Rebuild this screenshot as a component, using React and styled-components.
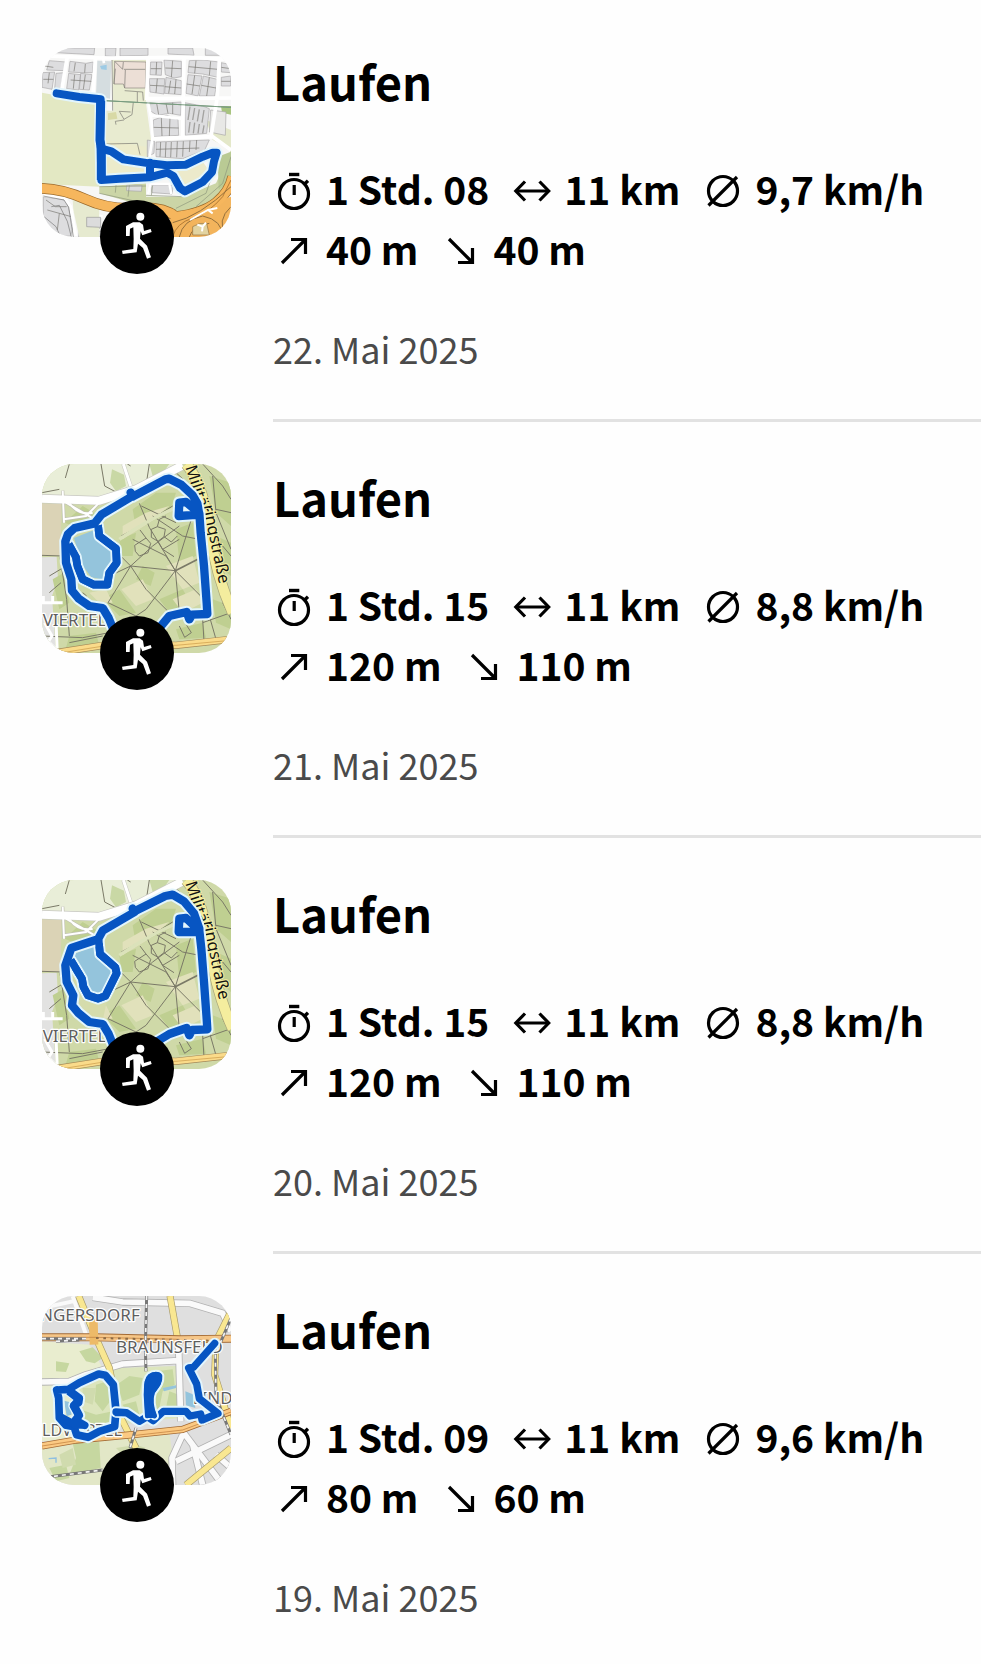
import styled, { createGlobalStyle } from 'styled-components';

const activities = [
  {
    id: 1,
    map: 'stadium',
    duration: '1 Std. 08',
    distance: '11 km',
    speed: '9,7 km/h',
    up: '40 m',
    down: '40 m',
    date: '22. Mai 2025',
    dateTime: '2025-05-22',
  },
  {
    id: 2,
    map: 'forestLong',
    duration: '1 Std. 15',
    distance: '11 km',
    speed: '8,8 km/h',
    up: '120 m',
    down: '110 m',
    date: '21. Mai 2025',
    dateTime: '2025-05-21',
  },
  {
    id: 3,
    map: 'forestShort',
    duration: '1 Std. 15',
    distance: '11 km',
    speed: '8,8 km/h',
    up: '120 m',
    down: '110 m',
    date: '20. Mai 2025',
    dateTime: '2025-05-20',
  },
  {
    id: 4,
    map: 'city',
    duration: '1 Std. 09',
    distance: '11 km',
    speed: '9,6 km/h',
    up: '80 m',
    down: '60 m',
    date: '19. Mai 2025',
    dateTime: '2025-05-19',
  },
];

const Track = ({ d, width = 23 }) => (
  <g fill='none' strokeLinejoin='round' strokeLinecap='round'>
    <path d={d} stroke='#e2f5fd' strokeWidth={width + 12} />
    <path d={d} stroke='#0755c2' strokeWidth={width} />
  </g>
);

const StadiumMap = () => (
  <MapSvg viewBox='18 24 567 567' aria-hidden='true'>
    <rect x='18' y='24' width='567' height='567' fill='#f7f7f6' />
    {/* fields */}
    <path d='M18 158 L60 166 L180 182 L190 440 L18 432Z' fill='#e3e8c3' />
    <path d='M228 60 L232 212 L205 212 L205 415 L330 415 L345 300 L330 190 L330 60Z' fill='#e8ebd0' />
    <path d='M205 300 L330 320 L335 420 L205 425Z' fill='#ecebcb' />
    <path d='M330 375 L500 365 L525 400 L440 460 L380 400Z' fill='#eceacb' />
    <path d='M190 440 L330 430 L330 470 L440 470 L540 430 L585 330 L585 430 L520 500 L400 520 L190 460Z' fill='#cbd5a6' />
    <path d='M545 350 L585 335 L585 420 L548 450Z' fill='#b9ca94' />
    <path d='M510 240 L585 270 L585 330 L530 300Z' fill='#e4e8c9' />
    <path d='M555 198 L585 198 L585 224 L558 218Z' fill='#a8c47f' />
    {/* blocks */}
    <g fill='#dddddf' stroke='#a9a8a9' strokeWidth='2'>
      <path d='M60 24 L176 24 L174 44 L58 38Z M208 24 L240 24 L238 50 L208 48Z M252 24 L336 24 L336 46 L252 48Z M396 24 L470 24 L474 46 L396 42Z M508 24 L560 28 L560 46 L508 46Z' />
      <path d='M40 62 L90 66 L86 92 L32 90Z M20 98 L56 96 L48 148 L18 142Z M60 100 L84 98 L74 146 L56 146Z' />
      <path d='M102 64 L150 70 L172 66 L170 98 L138 98 L98 96Z M98 100 L134 104 L128 150 L92 146Z M134 100 L168 104 L160 150 L130 148Z' />
      <path d='M344 66 L378 66 L376 106 L342 104Z M384 60 L436 64 L436 110 L414 114 L388 104Z M340 116 L386 116 L384 162 L342 156Z M390 112 L436 122 L436 164 L386 160Z' />
      <path d='M460 62 L504 60 L548 66 L546 112 L500 102 L456 98Z M456 104 L498 108 L486 168 L450 160Z M502 108 L544 118 L536 168 L490 168Z M556 68 L584 74 L584 98 L556 96Z M556 112 L584 108 L584 138 L556 138Z' />
      <path d='M336 192 L436 186 L434 226 L400 220 L364 226 L342 212Z M352 240 L392 226 L426 238 L428 286 L350 290Z' />
      <path d='M446 188 L500 198 L520 206 L512 280 L448 286Z' />
      <path d='M334 300 L356 304 L354 340 L334 350Z M360 306 L520 300 L506 330 L440 356 L360 350Z' />
      <path d='M524 210 L570 216 L568 286 L520 276Z' fill='#e8e8e6' />
      <path d='M344 436 L412 436 L408 462 L348 458Z M272 436 L318 436 L316 454 L272 452Z' />
      <path d='M22 470 L92 480 L112 560 L104 588 L60 590 L22 540Z M154 528 L192 534 L192 566 L150 558Z M130 570 L196 574 L196 591 L128 591Z' />
    </g>
    <path d='M184 62 L226 64 L222 176 L180 168Z' fill='#d5dde0' />
    <path d='M192 78 L212 74 L212 90 L196 88Z' fill='#9ecbe5' />
    <path d='M236 64 L330 66 L328 144 L266 144 L262 132 L234 132Z' fill='#ecdfd6' stroke='#8d867f' strokeWidth='2' />
    <path d='M216 220 L240 216 L244 236 L216 240Z' fill='#d8d9a5' />
    {/* plot lines */}
    <g fill='none' stroke='#77766f' strokeWidth='2'>
      <path d='M26 78 L52 82 M40 98 L36 130 M22 118 L52 118 M118 68 L114 94 M104 120 L166 124 M148 72 L146 98 M116 104 L112 146 M148 104 L142 148' />
      <path d='M344 86 L376 86 M362 66 L360 104 M388 84 L436 86 M410 62 L406 112 M342 136 L384 138 M364 116 L360 158 M404 122 L398 160 M386 140 L436 144 M420 118 L416 162' />
      <path d='M480 62 L476 100 M458 80 L546 88 M524 64 L520 106 M452 132 L492 138 M476 106 L468 162 M496 136 L540 144 M520 112 L512 168 M556 82 L584 86 M556 124 L584 124' />
      <path d='M362 190 L368 224 M390 190 L396 220 M410 188 L410 222 M352 262 L428 264 M376 234 L378 288 M402 232 L400 288' />
      <path d='M462 200 L456 240 M476 204 L470 240 M490 208 L484 244 M504 210 L498 248 M462 246 L458 278 M476 248 L472 280 M490 252 L486 280 M504 256 L500 280' stroke='#a3a2a0' strokeWidth='4' />
      <path d='M374 306 L372 350 M390 306 L388 352 M406 306 L404 352 M424 304 L422 352 M442 304 L440 350 M360 328 L490 324 M462 302 L460 336 M482 300 L480 330' />
      <path d='M236 64 L260 88 L262 66 M238 86 L234 132 M264 88 L328 88 M268 90 L266 144 M228 60 L230 212 M266 152 L320 156 L322 182 M304 156 L304 186 M292 186 L288 224 L264 238 L250 214 L284 216 M240 254 L238 244 L264 240 M205 312 L304 310 L312 344' />
      <path d='M190 440 L330 438 M190 460 L420 510 M240 436 L238 458 M280 436 L276 470 M350 436 L346 466 M548 350 L510 460 L420 505 M585 350 L560 430 L480 500 M330 466 L440 470' stroke='#8d967b' />
      <path d='M30 480 L58 500 L92 500 M34 510 L70 520 L64 570 M70 520 L106 530 M160 530 L158 556 M174 532 L172 558' />
    </g>
    <path d='M206 182 L585 202' stroke='#7a9c80' strokeWidth='3' fill='none' />
    {/* streets */}
    <g fill='none' stroke='#ffffff' strokeWidth='11'>
      <path d='M30 48 L200 54 L460 52 L585 58 M94 50 L76 156 M178 58 L170 180 M336 56 L332 180 M444 56 L440 290 M550 60 L544 170 L525 290 M330 176 L585 174 M350 296 L530 290 L585 330' />
      <path d='M336 186 L346 236 L350 290 L340 356 M346 226 L436 236 M204 70 L200 48' strokeWidth='8' />
      <path d='M336 462 L344 432 L400 432 L406 462' strokeWidth='7' />
      <path d='M22 466 L86 474 L104 500 L120 588 M110 510 L200 530' strokeWidth='9' />
    </g>
    <path d='M206 182 L585 202' stroke='#7a9c80' strokeWidth='3' fill='none' />
    <path d='M22 468 L84 480 L98 502 L112 591 M46 500 L70 496 L94 544 L106 591 M24 530 L60 560 L74 591' fill='none' stroke='#777' strokeWidth='2' />
    <path d='M110 480 L190 486 L190 591 L130 591 L112 510Z' fill='#e6ead0' />
    <path d='M152 532 L194 532 L194 562 L152 560Z' fill='#dcdcdc' stroke='#999' strokeWidth='2' />
    {/* motorway */}
    <g fill='none'>
      <path d='M14 445 Q80 446 150 478 T300 504 T420 530 Q500 520 540 488 T590 410' stroke='#9a6a2c' strokeWidth='32' />
      <path d='M400 540 L420 524 L585 470 L585 591 L400 591Z' fill='#f3b45c' />
      <path d='M14 445 Q80 446 150 478 T300 504 T420 530 Q500 520 540 488 T590 410' stroke='#f6b65d' strokeWidth='28' />
      <path d='M410 591 Q420 550 470 534 T560 470 L585 420' stroke='#b37a35' strokeWidth='3' />
      <path d='M430 591 Q440 540 500 528 Q560 540 560 591 M460 591 Q470 556 520 550 M585 500 Q540 540 570 591 M410 548 Q490 530 585 440' stroke='#94703d' strokeWidth='3' />
      <path d='M560 591 Q556 560 585 530 L585 591Z' fill='#d6cf98' />
      <path d='M470 560 Q490 546 512 550 L520 585 L470 585Z' fill='#e2d3a0' stroke='#94703d' strokeWidth='2' />
      <path d='M462 540 L516 510 L544 504 M516 510 L530 520 M484 554 L500 560 L498 574 M500 560 L510 548' stroke='#fff' strokeWidth='6' />
    </g>
    <Track d='M62 160 L130 171 L194 178 L192 300 L196 326 L226 334 L262 358 L340 370 L392 376 L450 374 L500 350 L530 338 L542 338 L534 364 L528 396 L500 426 L446 454 L432 444 L412 408 L394 398 L340 412 L250 416 L196 420 L194 320 M342 368 L342 412' width={24} />
    <path d='M194 182 L192 300 L196 326 L196 420' fill='none' stroke='#0755c2' strokeWidth='27' strokeLinejoin='round' />
  </MapSvg>
);

const forestTracks = {
  forestLong:
    'M232 520 L218 486 L200 456 L160 450 L128 428 L108 404 L106 370 L90 320 L88 256 L96 234 L116 216 L176 202 L196 176 L290 120 L284 110 L290 122 L388 70 L400 68 L436 86 L470 118 L484 142 L490 176 L428 180 L430 140 L450 138 L490 172 L494 230 L504 330 L512 440 L514 474 L468 476 L460 490 L452 468 L400 480 L370 516',
  forestShort:
    'M232 520 L218 486 L200 456 L160 450 L128 424 L108 400 L112 370 L92 330 L88 280 L106 228 L186 202 L200 176 L296 120 L290 110 L296 118 L388 72 L410 68 L444 88 L474 124 L490 170 L490 180 L428 180 L430 140 L450 138 L490 176 L496 230 L504 330 L512 440 L514 472 L468 474 L460 490 L452 468 L400 486 L360 510',
};

const lakeTracks = {
  forestLong: 'M186 208 L190 240 L240 278 L242 320 L220 350 L214 386 L174 386 L140 370 L124 330 L120 304 L98 264',
  forestShort: 'M188 204 L192 246 L238 286 L242 304 L208 372 L186 380 L156 370 L142 344 L138 320 L104 264',
};

const ForestMap = ({ variant }) => (
  <MapSvg viewBox='18 24 567 567' aria-hidden='true'>
    <rect x='18' y='24' width='567' height='567' fill='#cfd9a8' />
    <path d='M18 24 L440 24 L400 60 L200 130 L18 126Z' fill='#e9eed8' />
    <path d='M228 40 L264 56 L270 90 L240 106 L222 80Z M340 24 L400 24 L380 52 L350 60Z' fill='#c9d8a5' />
    <path d='M18 142 L76 144 L74 300 L18 298Z' fill='#dbd3b6' />
    <path d='M18 304 L62 302 L66 370 L48 420 L60 591 L18 591Z' fill='#e2e2e1' />
    <g fill='#bfcf91'>
      <path d='M86 200 L140 150 L190 180 L120 214Z M290 160 L360 110 L420 110 L400 170 L300 220Z M320 330 L356 350 L344 390 L300 370Z' />
      <path d='M200 430 L250 400 L300 470 L250 480Z M370 430 L440 400 L470 450 L400 470Z M520 60 L585 80 L585 210 L540 170Z M530 430 L585 450 L585 520 L540 500Z' />
      <path d='M50 370 L84 350 L100 440 L70 460Z M100 540 L180 530 L190 570 L90 575Z M420 220 L470 200 L480 300 L430 320Z M250 250 L300 230 L290 300 L256 300Z' />
      <path d='M540 240 L585 260 L585 360 L560 340Z M420 520 L500 500 L510 545 L430 550Z' />
    </g>
    <g fill='#e1e1bb'>
      <path d='M390 330 L470 300 L490 380 L440 400Z M260 210 L330 170 L400 150 L340 200 L260 250Z M256 400 L320 370 L350 430 L300 450Z M160 410 L210 400 L230 440 L190 440Z M410 430 L480 400 L500 440 L440 470Z' />
    </g>
    {/* paths through the woods */}
    <g fill='none' stroke='#7a7967' strokeWidth='3'>
      <path d='M418 344 L284 330 L244 290 M418 344 L340 214 L310 142 M418 344 L466 190 M418 344 L506 432 M418 344 L430 470 M418 344 L330 460 L300 480 M418 344 L390 300 L290 250' />
      <path d='M418 344 L500 302' strokeWidth='5' />
      <path d='M284 330 L216 440 M284 330 L330 400 L400 470 M284 330 L350 270 L430 210 M216 440 L300 480 M256 240 L330 200 L410 150 M316 150 L420 200 M350 180 L440 240 L490 250 M220 360 L284 330' />
      <path d='M296 268 L330 246 L344 262 L336 290 L310 300 L298 286Z M346 220 L364 212 L388 220 L384 242 L366 256 L346 244Z M384 242 L406 258 L424 240 M366 256 L380 280 L414 302 M330 246 L312 222 M380 280 L430 250 M364 212 L370 190 L390 180' />
      <path d='M18 298 L80 300 M72 304 L92 430 L100 540 M40 360 L90 330 M18 540 L140 545 L220 530 M44 530 L30 500 M140 410 L152 420 M75 380 L40 410' />
      <path d='M195 24 L206 90 L240 108 M284 30 L274 24 M340 24 L332 76 L320 90 M100 24 L88 66 M18 110 L70 100' />
      <path d='M420 50 L496 120 L524 250 M500 24 L560 90 L585 130 M530 60 L540 170 L585 280 M510 210 L585 300 M540 160 L585 170' />
      <path d='M500 500 L585 470 M430 510 L446 544 L466 530 L452 508 M520 480 L540 550 M500 490 L504 556 M560 440 L585 490 M100 560 L200 540' />
    </g>
    <path d='M250 250 Q320 200 412 158' fill='none' stroke='#dbe2ba' strokeWidth='10' />
    {/* roads */}
    <g fill='none' strokeLinejoin='round'>
      <path d='M18 128 L190 134 L300 100 L440 28' stroke='#c8c8c2' strokeWidth='28' />
      <path d='M262 24 L284 90' stroke='#c8c8c2' strokeWidth='12' />
      <path d='M80 104 L84 200 M84 190 L150 180 L190 140 M90 140 L176 190 M100 142 Q130 180 170 170' stroke='#c0c0b4' strokeWidth='10' />
      <path d='M18 128 L190 134 L300 100 L440 28' stroke='#fff' strokeWidth='24' />
      <path d='M262 24 L284 90' stroke='#fff' strokeWidth='9' />
      <path d='M80 104 L84 200 M84 190 L150 180 L190 140 M90 140 L176 190 M100 142 Q130 180 170 170' stroke='#fff' strokeWidth='6' />
      <path d='M18 440 L80 440 M50 420 L50 445 M22 420 L22 445 M60 500 L64 591 M26 500 L48 540 L22 580 M40 560 L60 580' stroke='#fff' strokeWidth='9' />
    </g>
    <path d='M450 24 Q500 80 520 220 T590 470' fill='none' stroke='#aaa77a' strokeWidth='34' />
    <path d='M450 24 Q500 80 520 220 T590 470' fill='none' stroke='#f4ed9e' strokeWidth='30' />
    <path d='M60 590 L240 562 L420 568 L585 550' fill='none' stroke='#a48958' strokeWidth='22' />
    <path d='M60 590 L240 562 L420 568 L585 550' fill='none' stroke='#fadb8a' strokeWidth='18' />
    <path d='M80 590 L240 564 L420 568 L585 553' fill='none' stroke='#c99746' strokeWidth='2' />
    {/* lake */}
    <path d='M114 246 L184 218 L194 248 L238 284 L234 324 L206 372 L166 364 L138 326Z' fill='#94c4dc' />
    {variant === 'forestShort' && (
      <path d='M108 268 L130 308 L138 354 L168 384 L214 382 L200 446 L150 430 L116 396 L118 356 L100 310Z' fill='#d5dcac' />
    )}
    <MapLabel x='20' y='509' $size={51}>VIERTEL</MapLabel>
    <StreetLabel transform='translate(448 34) rotate(72)'>Militär</StreetLabel>
    <StreetLabel transform='translate(500 150) rotate(78)'>ringstraße</StreetLabel>
    <Track d={lakeTracks[variant]} />
    <Track d={forestTracks[variant]} width={25} />
    <path d={lakeTracks[variant]} fill='none' stroke='#0755c2' strokeWidth='23' strokeLinejoin='round' />
  </MapSvg>
);

const cityStreets =
  'M170 28 L260 42 L460 46 L560 76 L585 130 M18 282 L100 280 L150 260 L260 228 L425 218 M428 180 L434 400 M440 430 L560 591 M410 591 L408 510 L440 440 M420 520 L585 440 M470 470 L500 591 M540 500 L585 540';
const cityMainRoads =
  'M128 24 L180 150 L220 240 L250 380 L300 480 M402 24 L428 170 M585 70 L540 160 L536 260 L585 420 M450 591 L585 480';
const cityRailway =
  'M332 24 L328 180 L330 250 M18 152 L150 152 M60 160 L130 156 M585 90 L538 200 L540 330 L585 440 M300 420 L282 480 M30 568 L200 546';

const CityMap = () => (
  <MapSvg viewBox='18 24 567 567' aria-hidden='true'>
    <rect x='18' y='24' width='567' height='567' fill='#dfdfdf' />
    <path d='M18 160 L160 170 L200 240 L200 450 L18 460Z' fill='#e9edcf' />
    <path d='M18 480 L200 450 L290 440 L400 430 L410 510 L380 591 L18 591Z' fill='#e2e7c7' />
    <path d='M100 280 L240 240 L420 234 L430 390 L330 400 L110 430Z' fill='#dce5bd' />
    <g fill='#c6d7a0'>
      <path d='M110 400 L120 360 L180 380 L230 370 L230 410 L170 440Z M242 290 L280 264 L320 270 L310 320 L260 340Z M360 250 L410 244 L416 290 L380 310 L366 380 L350 340Z' />
      <path d='M130 190 L170 178 L200 210 L176 226 L150 220Z M60 220 L100 226 L90 252 L60 250Z M110 466 L190 462 L194 540 L100 560 L120 510Z M40 540 L90 530 L100 570 L60 580Z' />
      <path d='M180 290 L214 280 L230 330 L200 370 L176 340Z M260 350 L300 340 L310 380 L280 390Z M400 310 L428 320 L428 360 L390 360Z' />
    </g>
    <g fill='#d0dbae'>
      <path d='M240 480 L300 470 L330 480 L260 500Z M70 500 L110 480 L120 530 L80 540Z M140 300 L180 300 L170 350 L140 340Z' />
    </g>
    <path d='M84 338 L110 344 L106 380 L92 384Z M380 300 L420 292 L420 300 L384 310Z M448 310 L474 320 L478 360 L450 352Z' fill='#94c4dc' />
    <path d='M38 512 L60 510 L60 524' fill='none' stroke='#8fbfe0' strokeWidth='4' />
    <g fill='none' strokeLinejoin='round'>
      <path d={cityStreets} stroke='#b3b3b3' strokeWidth='22' />
      <path d={cityStreets} stroke='#fafafa' strokeWidth='17' />
      <path d='M18 60 L110 40 M110 24 L150 140' stroke='#fafafa' strokeWidth='12' />
      <path d={cityMainRoads} stroke='#a89b6c' strokeWidth='21' />
      <path d={cityMainRoads} stroke='#f9e791' strokeWidth='17' />
      <path d='M18 148 L180 148 L430 154 L585 152' stroke='#a46b36' strokeWidth='24' />
      <path d='M18 148 L180 148 L430 154 L585 152' stroke='#f5c688' strokeWidth='19' />
      <path d='M172 92 L174 170' stroke='#edba68' strokeWidth='26' />
      <path d='M18 474 L120 456 L290 440 L440 424 L585 370' stroke='#a46b36' strokeWidth='22' />
      <path d='M18 474 L120 456 L290 440 L440 424 L585 370' stroke='#fbc982' strokeWidth='17' />
      <path d='M18 148 L180 148 L430 154 M300 442 L440 426 L585 372 M18 474 L120 458' stroke='#b9793a' strokeWidth='2' />
      {/* railway */}
      <path d={cityRailway} stroke='#777' strokeWidth='9' />
      <path d={cityRailway} stroke='#f3f3f3' strokeWidth='5' strokeDasharray='12 12' />
      <path d='M180 150 L520 158' stroke='#8b6a46' strokeWidth='6' strokeDasharray='8 14' />
    </g>
    <MapLabel x='12' y='100' $size={51}>NGERSDORF</MapLabel>
    <MapLabel x='240' y='194' $size={51}>BRAUNSFELD</MapLabel>
    <MapLabel x='470' y='349' $size={51}>LIND</MapLabel>
    <MapLabel x='18' y='443' $size={48}>LDVIERTEL</MapLabel>
    <Track
      d='M62 306 L68 330 L70 390 L90 412 L114 416 L122 440 L156 448 L190 430 L236 416 L240 368 L232 290 L208 262 L188 258 L130 284 L98 304 L64 306 M98 306 L130 330 L128 344 L114 352 L130 382 L118 396 L146 412 L110 404'
      width={23}
    />
    <Track
      d='M240 372 L272 374 L310 400 L334 386 L352 398 L382 370 L450 370 L462 384 L494 378 L498 396 L546 376 L490 332 L482 288 L458 240 L472 238 L536 166'
      width={22}
    />
    <Track
      d='M334 384 L330 320 C332 300 328 276 342 264 C352 256 368 256 372 264 C374 284 362 296 350 312 C344 330 342 350 356 384'
      width={14}
    />
    <path
      d='M334 384 L330 320 C332 300 328 276 342 264 C352 256 368 256 372 264 C374 284 362 296 350 312 C344 330 342 350 356 384Z'
      fill='#0755c2'
      stroke='#0755c2'
      strokeWidth='12'
      strokeLinejoin='round'
    />
    <path d='M98 310 L128 334 L112 354 L128 382 L120 404 M236 374 L270 374 M76 388 L120 412 L146 410' fill='none' stroke='#0755c2' strokeWidth='22' strokeLinejoin='round' />
  </MapSvg>
);

const RouteMap = ({ name }) => {
  if (name === 'stadium') return <StadiumMap />;
  if (name === 'city') return <CityMap />;
  return <ForestMap variant={name} />;
};

const Runner = () => (
  <Badge role='img' aria-label='Laufen'>
    <svg viewBox='189 480 222 222'>
      <circle cx='310' cy='530' r='12' fill='#fff' />
      <path
        d='M288 547 L308 547 L318 554 L321 573 L341 567 L344 576 L316 586 L311 574 L309 596 L330 617 L342 652 L330 656 L318 624 L303 611 L299 637 L257 642 L255 632 L289 627 L290 597 L289 562 L279 566 L278 588 L267 588 L267 558Z'
        fill='#fff'
      />
    </svg>
  </Badge>
);

const TimerIcon = () => (
  <Icon viewBox='0 0 42 42' aria-hidden='true'>
    <circle cx='21' cy='23' r='14.5' />
    <path d='M16 3.5 H26.3' strokeWidth='3.4' />
    <path d='M21.2 14 V24' strokeWidth='3.2' />
    <path d='M31.5 13 L35 9.8' strokeWidth='3.4' />
  </Icon>
);

const DistanceIcon = () => (
  <Icon viewBox='0 0 42 42' aria-hidden='true'>
    <path d='M5 20 H37.5' />
    <path d='M14 10.5 L4.8 20 L14 29.5 M28.5 10.5 L37.7 20 L28.5 29.5' />
  </Icon>
);

const SpeedIcon = () => (
  <Icon viewBox='0 0 42 42' aria-hidden='true'>
    <circle cx='21' cy='20' r='14.5' />
    <path d='M6.5 34.5 L35 6' />
  </Icon>
);

const UpIcon = () => (
  <Icon viewBox='0 0 42 42' aria-hidden='true'>
    <path d='M9 32 L32.5 8.5 M18 8.5 H32.5 V23' />
  </Icon>
);

const DownIcon = () => (
  <Icon viewBox='0 0 42 42' aria-hidden='true'>
    <path d='M9 8 L32.5 31.5 M32.5 17 V31.5 H18' />
  </Icon>
);

const Activity = ({ activity }) => (
  <Item>
    <Preview>
      <RouteMap name={activity.map} />
      <Runner />
    </Preview>
    <Details>
      <Title>Laufen</Title>
      <Stats>
        <Stat>
          <TimerIcon />
          {activity.duration}
        </Stat>
        <Stat>
          <DistanceIcon />
          {activity.distance}
        </Stat>
        <Stat>
          <SpeedIcon />
          {activity.speed}
        </Stat>
        <Stat>
          <UpIcon />
          {activity.up}
        </Stat>
        <Stat>
          <DownIcon />
          {activity.down}
        </Stat>
      </Stats>
      <ActivityDate dateTime={activity.dateTime}>{activity.date}</ActivityDate>
    </Details>
  </Item>
);

const App = () => {
  return (
    <>
      <GlobalStyle />
      <ActivityList>
        {activities.map((activity) => (
          <Activity key={activity.id} activity={activity} />
        ))}
      </ActivityList>
    </>
  );
};

export default App;

const GlobalStyle = createGlobalStyle`
  * {
    box-sizing: border-box;
  }

  body {
    margin: 0;
    background-color: #fefefe;
    color: #000;
    font-family: 'Noto Sans CJK SC', 'Noto Sans', sans-serif;
  }
`;

const ActivityList = styled.ul`
  list-style: none;
  margin: 0;
  padding: 6px 0 0 42px;
`;

const Item = styled.li`
  display: flex;
  align-items: flex-start;
  gap: 42px;
  padding-top: 42px;
`;

const Preview = styled.div`
  position: relative;
  flex: none;
  width: 189px;
`;

const MapSvg = styled.svg`
  display: block;
  width: 189px;
  height: 189px;
  border-radius: 32px;
`;

const MapLabel = styled.text`
  font-family: 'Noto Sans', sans-serif;
  font-size: ${({ $size }) => $size}px;
  fill: #5e5e5e;
  stroke: #fff;
  stroke-width: 7px;
  stroke-linejoin: round;
  paint-order: stroke;
`;

const StreetLabel = styled.text`
  font-family: 'Noto Sans', sans-serif;
  font-size: 49px;
  fill: #111;
  stroke: #f4ed9e;
  stroke-width: 6px;
  paint-order: stroke;
`;

const Badge = styled.div`
  position: absolute;
  left: 50%;
  bottom: 0;
  width: 74px;
  height: 74px;
  border-radius: 50%;
  background-color: #000;
  transform: translate(-50%, 50%);

  svg {
    display: block;
  }
`;

const Details = styled.div`
  flex: 1;
  min-width: 0;
  padding-bottom: 47px;
  border-bottom: 3px solid #e2e2e2;

  ${Item}:last-child & {
    border-bottom: none;
    padding-bottom: 0;
  }
`;

const Title = styled.h2`
  margin: 0;
  font-size: 47px;
  font-weight: 700;
  line-height: 66px;
`;

const Stats = styled.div`
  display: flex;
  flex-wrap: wrap;
  column-gap: 22px;
  margin: 44px 0 46px;
`;

const Stat = styled.span`
  display: flex;
  align-items: center;
  gap: 11px;
  font-size: 39px;
  font-weight: 700;
  line-height: 60px;
  white-space: nowrap;
`;

const Icon = styled.svg`
  flex: none;
  width: 42px;
  height: 42px;
  margin-top: 7px;
  fill: none;
  stroke: #000;
  stroke-width: 3.2;
`;

const ActivityDate = styled.time`
  display: block;
  color: #4a4a4a;
  font-size: 36px;
  line-height: 48px;
`;
